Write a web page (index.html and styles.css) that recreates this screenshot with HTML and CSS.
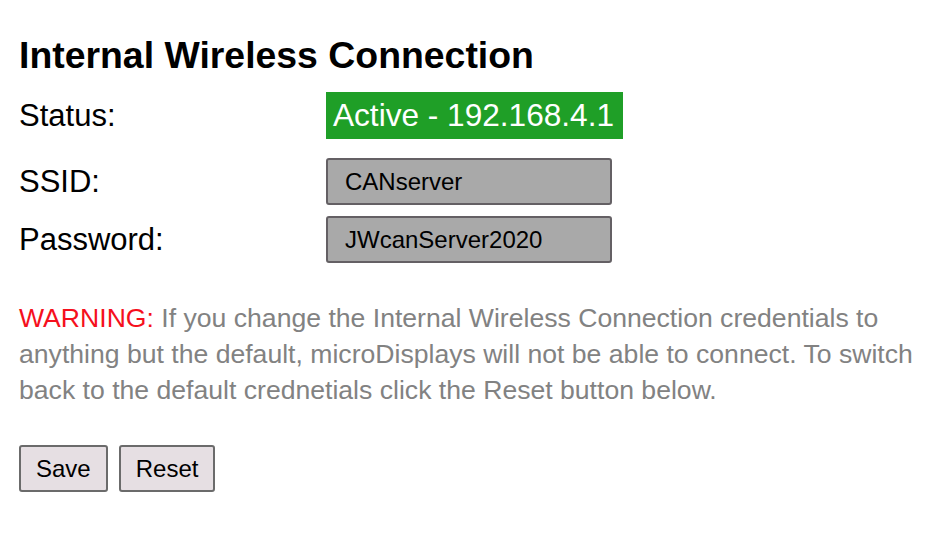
FILE: index.html
```html
<!DOCTYPE html>
<html>
<head>
<meta charset="utf-8">
<link rel="stylesheet" href="styles.css">
</head>
<body>
<div class="page">
  <h2 class="title">Internal Wireless Connection</h2>
  <div class="form">
    <div class="label">Status:</div>
    <div class="field"><span class="status">Active - 192.168.4.1</span></div>
    <div class="label">SSID:</div>
    <div class="field"><div class="input">CANserver</div></div>
    <div class="label">Password:</div>
    <div class="field"><div class="input">JWcanServer2020</div></div>
  </div>
  <p class="warning"><span class="warn">WARNING:</span> If you change the Internal Wireless Connection credentials to anything but the default, microDisplays will not be able to connect. To switch back to the default crednetials click the Reset button below.</p>
  <div class="buttons">
    <button class="btn">Save</button>
    <button class="btn">Reset</button>
  </div>
</div>
</body>
</html>
```
FILE: styles.css
```css
html, body {
  margin: 0;
  padding: 0;
  background: #fff;
}
body {
  font-family: "Liberation Sans", Arial, Helvetica, sans-serif;
  color: #000;
}
.page {
  padding: 33px 0 0 19px;
}
.title {
  margin: 0;
  font-size: 37.4px;
  font-weight: bold;
  line-height: 44px;
}
.form {
  display: grid;
  grid-template-columns: 307px auto;
  align-items: center;
  margin-top: 15px;
}
.label {
  font-size: 31px;
  line-height: 47px;
}
.field {
  display: flex;
  align-items: center;
}
.status {
  background: #1f9f27;
  color: #fff;
  font-size: 31.6px;
  height: 47px;
  line-height: 47px;
  padding: 0 9px 0 7px;
}
.input {
  box-sizing: border-box;
  width: 286px;
  height: 47px;
  background: #a9a9a9;
  border: 2px solid #646064;
  border-radius: 3px;
  font-size: 24px;
  line-height: 43px;
  padding-left: 17px;
}
.form .label:nth-child(3),
.form .field:nth-child(4) .input {
  margin-top: 19px;
}
.form .label:nth-child(5),
.form .field:nth-child(6) .input {
  margin-top: 11px;
}
.warning {
  margin: 37px 0 0 0;
  width: 910px;
  font-size: 26.6px;
  line-height: 36px;
  color: #828282;
}
.warn {
  color: #f5101d;
}
.buttons {
  display: flex;
  gap: 11px;
  margin-top: 37px;
}
.btn {
  box-sizing: border-box;
  height: 47px;
  padding: 0 15px;
  background: #e6dfe3;
  border: 2px solid #6b6b6b;
  border-radius: 3px;
  font-family: "Liberation Sans", Arial, Helvetica, sans-serif;
  font-size: 24px;
  color: #000;
}
```
